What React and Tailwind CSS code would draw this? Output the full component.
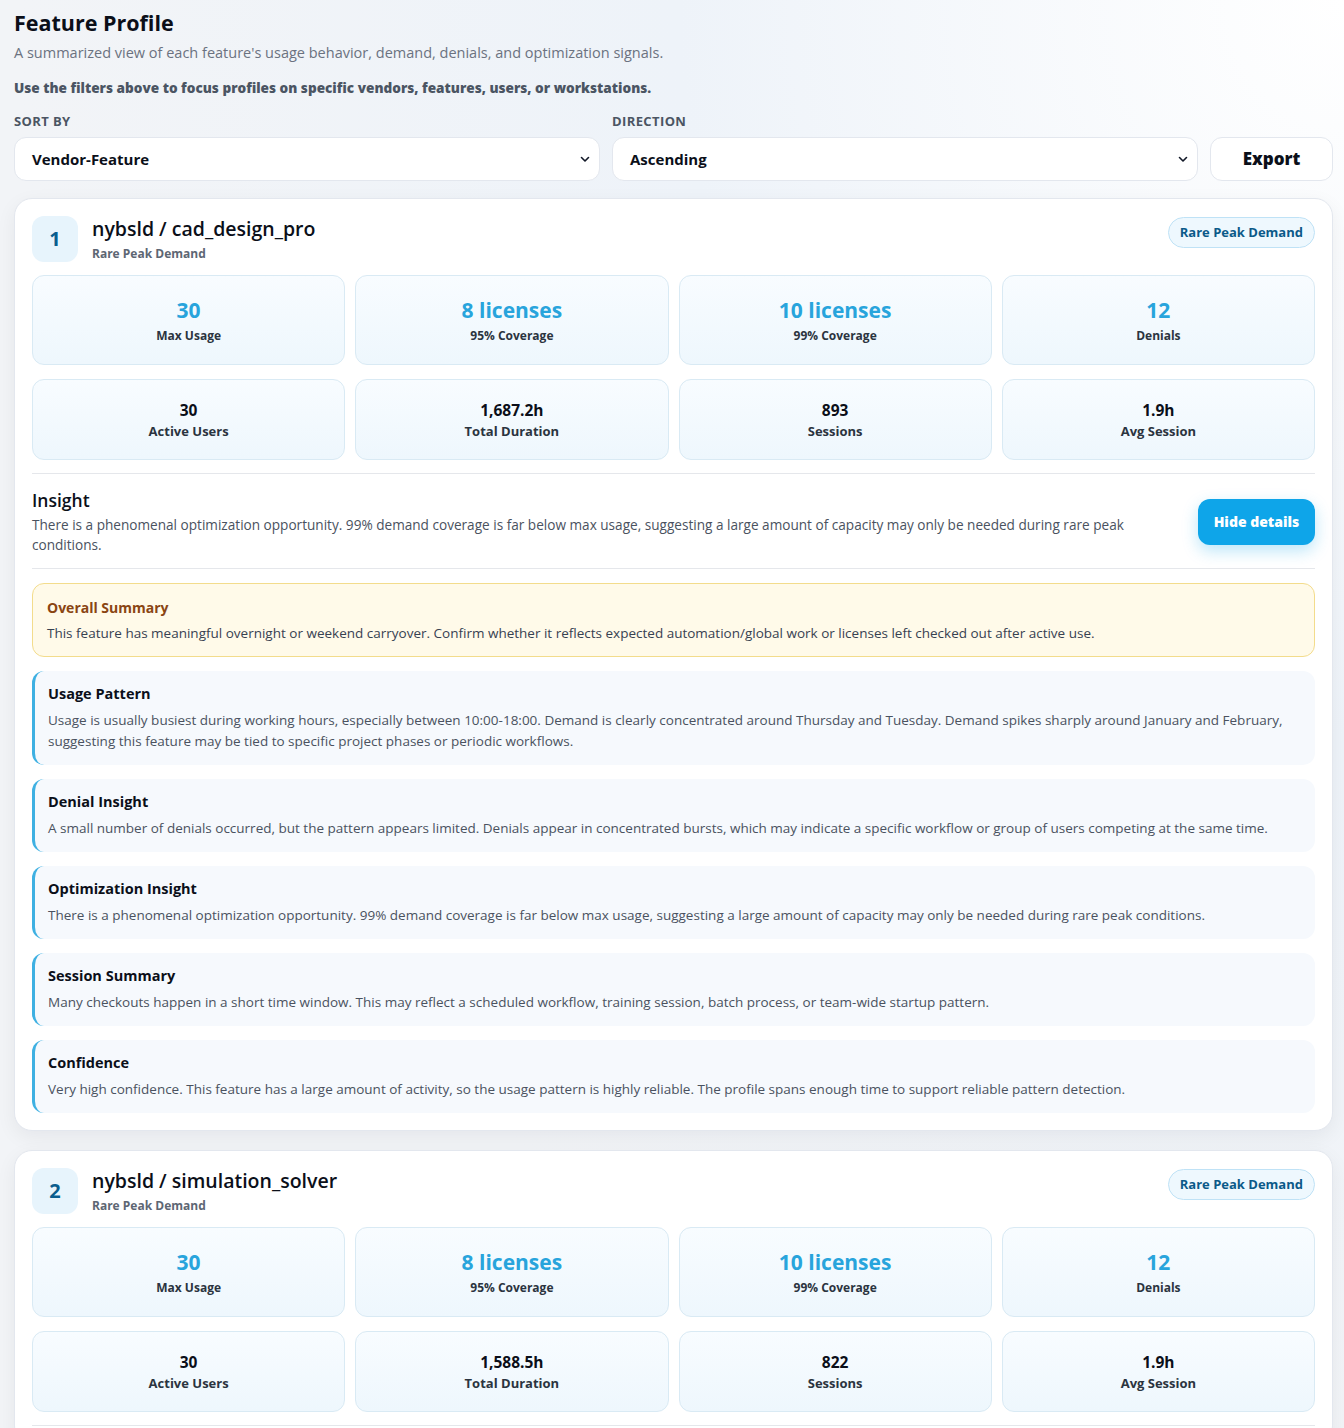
import React from "react";

const FONT = { fontFamily: '"Open Sans", "Noto Sans", Arial, sans-serif' };

const profiles = [
  {
    rank: 1,
    name: "nybsld / cad_design_pro",
    tag: "Rare Peak Demand",
    top: [
      { value: "30", label: "Max Usage" },
      { value: "8 licenses", label: "95% Coverage" },
      { value: "10 licenses", label: "99% Coverage" },
      { value: "12", label: "Denials" },
    ],
    bottom: [
      { value: "30", label: "Active Users" },
      { value: "1,687.2h", label: "Total Duration" },
      { value: "893", label: "Sessions" },
      { value: "1.9h", label: "Avg Session" },
    ],
    expanded: true,
  },
  {
    rank: 2,
    name: "nybsld / simulation_solver",
    tag: "Rare Peak Demand",
    top: [
      { value: "30", label: "Max Usage" },
      { value: "8 licenses", label: "95% Coverage" },
      { value: "10 licenses", label: "99% Coverage" },
      { value: "12", label: "Denials" },
    ],
    bottom: [
      { value: "30", label: "Active Users" },
      { value: "1,588.5h", label: "Total Duration" },
      { value: "822", label: "Sessions" },
      { value: "1.9h", label: "Avg Session" },
    ],
    expanded: false,
  },
];

const insight =
  "There is a phenomenal optimization opportunity. 99% demand coverage is far below max usage, suggesting a large amount of capacity may only be needed during rare peak conditions.";

const sections = [
  {
    title: "Usage Pattern",
    text: "Usage is usually busiest during working hours, especially between 10:00-18:00. Demand is clearly concentrated around Thursday and Tuesday. Demand spikes sharply around January and February, suggesting this feature may be tied to specific project phases or periodic workflows.",
  },
  {
    title: "Denial Insight",
    text: "A small number of denials occurred, but the pattern appears limited. Denials appear in concentrated bursts, which may indicate a specific workflow or group of users competing at the same time.",
  },
  {
    title: "Optimization Insight",
    text: insight,
  },
  {
    title: "Session Summary",
    text: "Many checkouts happen in a short time window. This may reflect a scheduled workflow, training session, batch process, or team-wide startup pattern.",
  },
  {
    title: "Confidence",
    text: "Very high confidence. This feature has a large amount of activity, so the usage pattern is highly reliable. The profile spans enough time to support reliable pattern detection.",
  },
];

function Chevron() {
  return (
    <svg width="10" height="7" viewBox="0 0 10 7" fill="none">
      <path d="M1.5 1.5L5 5L8.5 1.5" stroke="#111827" strokeWidth="1.6" strokeLinecap="round" strokeLinejoin="round" />
    </svg>
  );
}

function SelectBox({ value }) {
  return (
    <div className="flex h-[44px] items-center justify-between rounded-xl border border-[#e3e7ee] bg-white pl-[17px] pr-[9px]">
      <span className="text-[15px] font-bold text-[#0b0f19]">{value}</span>
      <Chevron />
    </div>
  );
}

function TopMetric({ value, label }) {
  return (
    <div className="flex h-[90px] flex-col items-center justify-center rounded-xl border border-[#d9eaf4] bg-gradient-to-b from-[#f8fcff] to-[#eef7fd]">
      <div className="text-[21px] font-bold leading-[28px] text-[#28a4dc]">{value}</div>
      <div className="mt-[4px] text-[12px] font-bold leading-[16px] text-[#2b3440]">{label}</div>
    </div>
  );
}

function BottomMetric({ value, label }) {
  return (
    <div className="flex h-[81px] flex-col items-center justify-center rounded-xl border border-[#d9eaf4] bg-gradient-to-b from-[#f8fcff] to-[#eef7fd]">
      <div className="text-[15.5px] font-bold leading-[20px] text-[#0b0f19]">{value}</div>
      <div className="mt-[2px] text-[13px] font-bold leading-[18px] text-[#2b3440]">{label}</div>
    </div>
  );
}

function DetailBox({ title, text }) {
  return (
    <div className="rounded-xl border-l-[3px] border-[#3eb0e2] bg-[#f6f9fd] pb-[13px] pl-[13px] pr-[16px] pt-[12px]">
      <div className="text-[14.5px] font-bold leading-[22px] text-[#0b0f19]">{title}</div>
      <p className="mt-[5px] text-[13.5px] leading-[21px] text-[#4a5260]">{text}</p>
    </div>
  );
}

function ProfileCard({ p }) {
  return (
    <div className="rounded-[18px] border border-[#e3e7ee] bg-white p-[17px] shadow-[0_6px_20px_rgba(15,23,42,0.06)]">
      <div className="flex items-start justify-between">
        <div className="flex items-center gap-[14px]">
          <div className="flex h-[46px] w-[46px] items-center justify-center rounded-xl bg-[#e7f4fc] text-[20px] font-bold text-[#0a5d8e]">
            {p.rank}
          </div>
          <div>
            <div className="-mt-[1px] text-[19.5px] font-semibold leading-[26px] text-[#0b0f19]">{p.name}</div>
            <div className="mt-[4px] text-[12px] font-bold leading-[16px] text-[#5d6673]">{p.tag}</div>
          </div>
        </div>
        <div className="mt-px rounded-full border border-[#bfe2f6] bg-[#eef8fe] px-[11px] py-[5px] text-[13px] font-bold leading-[19px] text-[#0b5a89]">
          {p.tag}
        </div>
      </div>

      <div className="mt-[13px] grid grid-cols-4 gap-[10px]">
        {p.top.map((m) => (
          <TopMetric key={m.label} {...m} />
        ))}
      </div>
      <div className="mt-[14px] grid grid-cols-4 gap-[10px]">
        {p.bottom.map((m) => (
          <BottomMetric key={m.label} {...m} />
        ))}
      </div>

      <div className="mt-[13px] h-px bg-[#e5e7eb]" />

      {p.expanded && (
        <>
          <div className="flex items-center gap-6 pb-[13px] pt-[14px]">
            <div className="flex-1">
              <div className="text-[17.5px] font-semibold leading-[24px] text-[#0b0f19]">Insight</div>
              <p className="mt-[3px] text-[13.6px] leading-[20px] text-[#4a5260]">{insight}</p>
            </div>
            <button className="h-[46px] w-[117px] shrink-0 rounded-xl bg-[#0ea5e9] text-[14px] font-extrabold text-white shadow-[0_6px_16px_rgba(14,165,233,0.28)]">
              Hide details
            </button>
          </div>
          <div className="h-px bg-[#e5e7eb]" />

          <div className="mt-[14px] flex flex-col gap-[14px]">
            <div className="rounded-xl border border-[#f3dc8c] bg-[#fffae9] px-[14px] pb-[13px] pt-[14px]">
              <div className="text-[14px] font-bold leading-[20px] text-[#8a4512]">Overall Summary</div>
              <p className="mt-[5px] text-[13.5px] leading-[20px] text-[#374151]">
                This feature has meaningful overnight or weekend carryover. Confirm whether it reflects expected automation/global work or licenses left checked out after active use.
              </p>
            </div>
            {sections.map((s) => (
              <DetailBox key={s.title} {...s} />
            ))}
          </div>
        </>
      )}
    </div>
  );
}

export default function App() {
  return (
    <div
      className="min-h-screen bg-[#eef0f4] bg-[radial-gradient(ellipse_at_top_right,#ffffff_0%,#eef3f9_35%,#f2f4f7_70%)] pb-10 pl-[14px] pr-[11px] pt-[9px]"
      style={FONT}
    >
      <h1 className="text-[21.5px] font-bold leading-[28px] text-[#0b0f19]">Feature Profile</h1>
      <p className="mt-[6px] text-[14.5px] leading-[20px] text-[#6b7280]">
        A summarized view of each feature's usage behavior, demand, denials, and optimization signals.
      </p>
      <p className="mt-[15px] text-[13.6px] font-extrabold leading-[20px] text-[#4b5563]">
        Use the filters above to focus profiles on specific vendors, features, users, or workstations.
      </p>

      <div className="mt-[15px] grid grid-cols-[1fr_1fr_123px] gap-x-[12px]">
        <div>
          <div className="mb-[8px] text-[13px] font-bold uppercase leading-[16px] tracking-[0.03em] text-[#4b5563]">Sort by</div>
          <SelectBox value="Vendor-Feature" />
        </div>
        <div>
          <div className="mb-[8px] text-[13px] font-bold uppercase leading-[16px] tracking-[0.03em] text-[#4b5563]">Direction</div>
          <SelectBox value="Ascending" />
        </div>
        <div className="flex flex-col justify-end">
          <button className="h-[44px] rounded-xl border border-[#e3e7ee] bg-white text-[17px] font-extrabold text-[#0b0f19]">
            Export
          </button>
        </div>
      </div>

      <div className="mt-[17px] flex flex-col gap-[19px]">
        {profiles.map((p) => (
          <ProfileCard key={p.rank} p={p} />
        ))}
      </div>
    </div>
  );
}
